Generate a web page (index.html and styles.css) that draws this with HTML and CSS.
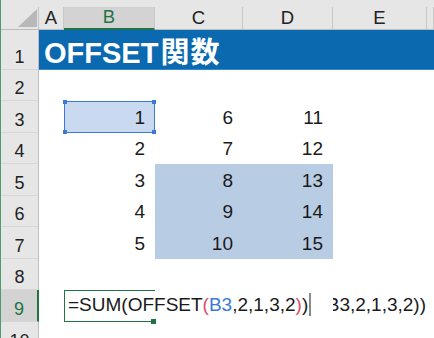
FILE: index.html
```html
<!DOCTYPE html>
<html lang="ja">
<head>
    <meta charset="UTF-8">
    <meta name="viewport" content="width=device-width, initial-scale=1.0">
    <title>OFFSET関数</title>
    <link rel="stylesheet" href="styles.css">
</head>
<body>

<div class="sheet">
    <!-- column headers -->
    <div class="strip"></div>
    <div class="corner"><span class="tri"></span></div>
    <div class="colhead">A</div>
    <div class="colhead active">B</div>
    <div class="colhead">C</div>
    <div class="colhead">D</div>
    <div class="colhead">E</div>
    <div class="colhead"></div>

    <!-- row 1 -->
    <div class="rowhead">1</div>
    <div class="title">OFFSET<span class="kanji">関数</span></div>

    <!-- row 2 -->
    <div class="rowhead">2</div>
    <div class="cell"></div><div class="cell"></div><div class="cell"></div>
    <div class="cell"></div><div class="cell"></div><div class="cell"></div>

    <!-- row 3 -->
    <div class="rowhead">3</div>
    <div class="cell"></div>
    <div class="cell num ref">1
        <span class="hdl tl"></span><span class="hdl tr"></span>
        <span class="hdl bl"></span><span class="hdl br"></span>
    </div>
    <div class="cell num">6</div>
    <div class="cell num">11</div>
    <div class="cell"></div><div class="cell"></div>

    <!-- row 4 -->
    <div class="rowhead">4</div>
    <div class="cell"></div>
    <div class="cell num">2</div>
    <div class="cell num">7</div>
    <div class="cell num">12</div>
    <div class="cell"></div><div class="cell"></div>

    <!-- row 5 -->
    <div class="rowhead">5</div>
    <div class="cell"></div>
    <div class="cell num">3</div>
    <div class="cell num fill">8</div>
    <div class="cell num fill">13</div>
    <div class="cell"></div><div class="cell"></div>

    <!-- row 6 -->
    <div class="rowhead">6</div>
    <div class="cell"></div>
    <div class="cell num">4</div>
    <div class="cell num fill">9</div>
    <div class="cell num fill">14</div>
    <div class="cell"></div><div class="cell"></div>

    <!-- row 7 -->
    <div class="rowhead">7</div>
    <div class="cell"></div>
    <div class="cell num">5</div>
    <div class="cell num fill">10</div>
    <div class="cell num fill">15</div>
    <div class="cell"></div><div class="cell"></div>

    <!-- row 8 -->
    <div class="rowhead">8</div>
    <div class="cell"></div><div class="cell"></div><div class="cell"></div>
    <div class="cell"></div><div class="cell"></div><div class="cell"></div>

    <!-- row 9: formula being edited -->
    <div class="rowhead active">9</div>
    <div class="cell"></div>
    <div class="cell edit">
        <span class="formula">=SUM(OFFSET<span class="p1">(</span><span class="r1">B3</span>,2,1,3,2<span class="p1">)</span>)<span class="caret"></span></span>
        <span class="handle"></span>
    </div>
    <div class="cell"></div>
    <div class="cell"></div>
    <div class="cell clip"><span class="formula">B3,2,1,3,2))</span></div>
    <div class="cell"></div>

    <!-- row 10 -->
    <div class="rowhead">10</div>
    <div class="cell"></div><div class="cell"></div><div class="cell"></div>
    <div class="cell"></div><div class="cell"></div><div class="cell"></div>
</div>

</body>
</html>
```

FILE: styles.css
```css
html, body {
    margin: 0;
    padding: 0;
    height: 338px;
    overflow: hidden;
    background: #ffffff;
}

body {
    font-family: "Liberation Sans", "Noto Sans CJK JP", sans-serif;
    color: #1a1a1a;
}

.sheet {
    display: grid;
    grid-template-columns: 38px 25px 91px 88px 90px 94px 1fr;
    grid-template-rows: 7px 23px 40px 31px 32px 31px 32px 31px 32px 31px 32px 32px;
    border-left: 1px solid #4f9a6c;
}

/* header strip and column letters */
.strip {
    grid-column: 1 / -1;
    background: #e6e6e6;
}

.corner {
    background: #e6e6e6;
    border-right: 1px solid #c4c4c4;
    border-bottom: 1px solid #bdbdbd;
    display: flex;
    justify-content: flex-end;
    align-items: flex-end;
    padding: 0 1px 2px 0;
}

.tri {
    width: 0;
    height: 0;
    border-left: 19px solid transparent;
    border-bottom: 18px solid #b8b8b8;
}

.colhead {
    background: #e6e6e6;
    border-right: 1px solid #c8c8c8;
    border-bottom: 1px solid #bdbdbd;
    font-size: 18.5px;
    display: flex;
    justify-content: center;
    align-items: flex-end;
    line-height: normal;
    color: #222;
}

.colhead.active {
    background: #d3d3d3;
    color: #217346;
    border-bottom: 2px solid #217346;
}

/* row numbers */
.rowhead {
    background: #e6e6e6;
    border-right: 1px solid #bdbdbd;
    border-bottom: 1px solid #d6d6d6;
    font-size: 18px;
    display: flex;
    justify-content: center;
    align-items: flex-end;
    padding-bottom: 1px;
    color: #222;
}

.rowhead.active {
    background: #d3d3d3;
    color: #217346;
    border-right: 2px solid #217346;
}

/* title band */
.title {
    grid-column: 2 / -1;
    background: #0b69b0;
    border-bottom: 1px solid #3a86c6;
    color: #ffffff;
    font-size: 29px;
    font-weight: bold;
    line-height: 40px;
    padding: 3px 0 0 5px;
    white-space: nowrap;
}

.kanji {
    margin-left: 2px;
    letter-spacing: 1px;
}

/* cells */
.cell {
    position: relative;
    font-size: 19px;
    white-space: nowrap;
}

.num {
    display: flex;
    justify-content: flex-end;
    align-items: flex-end;
    padding: 0 10px 4px 0;
}

.fill {
    background: #b8cce4;
}

.ref {
    background: #c9d9ef;
    border: 1px solid #3c78d8;
    padding: 0 9px 3px 0;
}

.hdl {
    position: absolute;
    width: 4px;
    height: 4px;
    background: #3c78d8;
}
.hdl.tl { left: -2px; top: -2px; }
.hdl.tr { right: -2px; top: -2px; }
.hdl.bl { left: -2px; bottom: -2px; }
.hdl.br { right: -2px; bottom: -2px; }

.edit {
    border: 1px solid #217346;
    border-right: none;
    display: flex;
    align-items: flex-end;
    padding: 0 0 5px 3px;
}

.formula {
    font-size: 19px;
    line-height: normal;
    background: #ffffff;
}

.p1 {
    color: #e04d6a;
}

.r1 {
    color: #3c78d8;
}

.caret {
    display: inline-block;
    width: 2px;
    height: 23px;
    margin-left: 1px;
    vertical-align: -5px;
    background: #8a8a8a;
}

.handle {
    position: absolute;
    right: -1px;
    bottom: -3px;
    width: 5px;
    height: 5px;
    background: #217346;
}

.clip {
    overflow: hidden;
    display: flex;
    justify-content: flex-end;
    align-items: flex-end;
    padding: 0 1px 6px 0;
}
```
